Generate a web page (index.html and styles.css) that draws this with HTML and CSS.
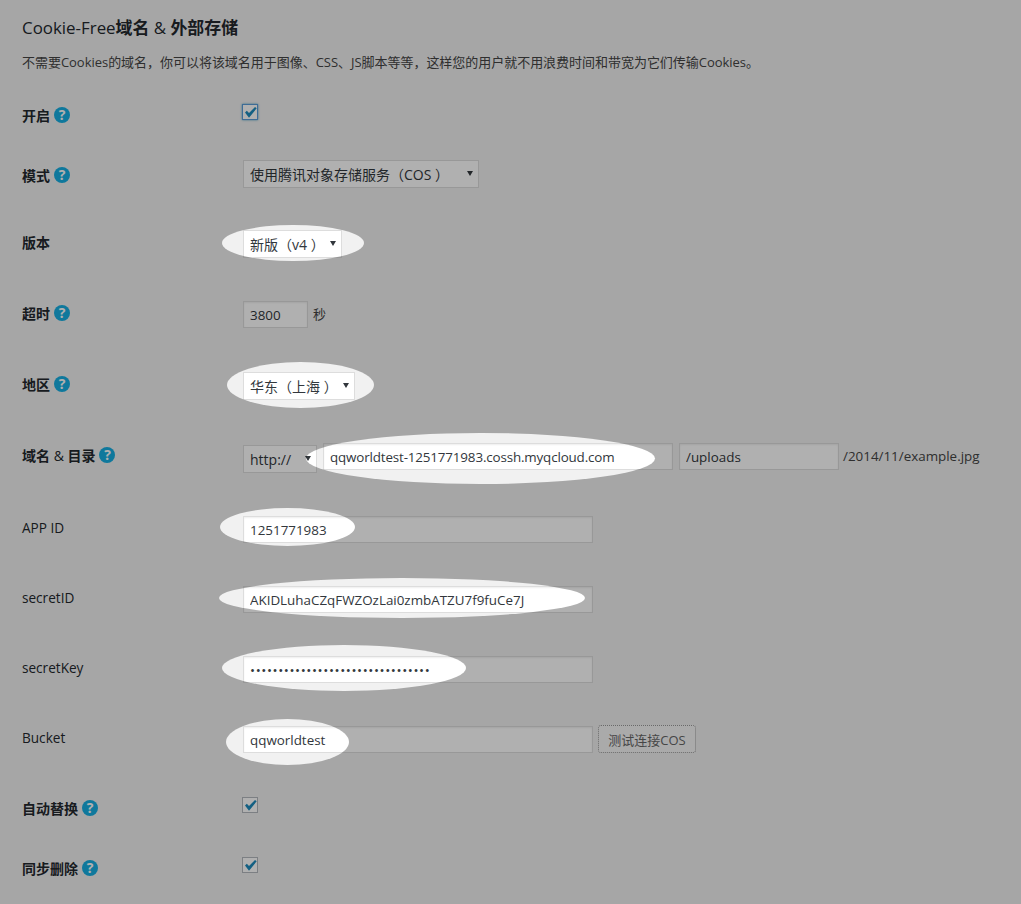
FILE: index.html
```html
<!DOCTYPE html>
<html lang="zh-CN">
<head>
<meta charset="utf-8">
<title>Cookie-Free域名 &amp; 外部存储</title>
<link rel="stylesheet" href="styles.css">
</head>
<body>
<main class="page">
  <h2 class="title"><span class="latin">Cookie-Free</span>域名 <span class="latin">&amp;</span> 外部存储</h2>
  <p class="desc">不需要Cookies的域名，你可以将该域名用于图像、CSS、JS脚本等等，这样您的用户就不用浪费时间和带宽为它们传输Cookies。</p>
  <form class="form">
    <div class="label label-up"><span>开启</span><span class="help">?</span></div>
    <div class="field"><label class="check"><input type="checkbox" class="box box-focus" checked><svg class="tick" viewBox="0 0 16 16"><path d="M3 8.5L4.8 6.8l2.2 2.3L13 3l1.7 1.3L7 13.7z"/></svg></label></div>

    <div class="label label-down"><span>模式</span><span class="help">?</span></div>
    <div class="field"><span class="select select-mode"><select><option>使用腾讯对象存储服务（COS ）</option></select></span></div>

    <div class="label"><span>版本</span></div>
    <div class="field"><span class="select select-ver"><select><option>新版（v4 ）</option></select></span></div>

    <div class="label"><span>超时</span><span class="help">?</span></div>
    <div class="field"><input class="text text-short" value="3800"><span class="unit">秒</span></div>

    <div class="label"><span>地区</span><span class="help">?</span></div>
    <div class="field"><span class="select select-region"><select><option>华东（上海 ）</option></select></span></div>

    <div class="label"><span>域名 <span class="latin">&amp;</span> 目录</span><span class="help">?</span></div>
    <div class="field"><span class="select select-proto"><select><option>http://</option></select></span><input class="text text-wide text-domain" value="qqworldtest-1251771983.cossh.myqcloud.com"><input class="text text-dir" value="/uploads"><span class="suffix">/2014/11/example.jpg</span></div>

    <div class="label label-plain"><span>APP ID</span></div>
    <div class="field"><input class="text text-wide" value="1251771983"></div>

    <div class="label label-plain"><span>secretID</span></div>
    <div class="field"><input class="text text-wide" value="AKIDLuhaCZqFWZOzLai0zmbATZU7f9fuCe7J"></div>

    <div class="label label-plain"><span>secretKey</span></div>
    <div class="field"><input class="text text-wide text-secret" type="password" value="abcdefghijklmnopqrstuvwxyz012345"></div>

    <div class="label label-plain"><span>Bucket</span></div>
    <div class="field"><input class="text text-wide" value="qqworldtest"><button type="button" class="button">测试连接COS</button></div>

    <div class="label label-up"><span>自动替换</span><span class="help">?</span></div>
    <div class="field"><label class="check"><input type="checkbox" class="box" checked><svg class="tick" viewBox="0 0 16 16"><path d="M3 8.5L4.8 6.8l2.2 2.3L13 3l1.7 1.3L7 13.7z"/></svg></label></div>

    <div class="label label-up"><span>同步删除</span><span class="help">?</span></div>
    <div class="field"><label class="check"><input type="checkbox" class="box" checked><svg class="tick" viewBox="0 0 16 16"><path d="M3 8.5L4.8 6.8l2.2 2.3L13 3l1.7 1.3L7 13.7z"/></svg></label></div>
  </form>
</main>
<svg class="dim" viewBox="0 0 1021 904" aria-hidden="true">
  <mask id="holes">
    <rect width="1021" height="904" fill="#fff"/>
    <ellipse cx="293" cy="243" rx="71" ry="18"/>
    <ellipse cx="300.5" cy="385" rx="73.5" ry="23"/>
    <ellipse cx="480.5" cy="458.5" rx="174.5" ry="25.5"/>
    <ellipse cx="287.5" cy="527" rx="67.5" ry="19"/>
    <ellipse cx="402" cy="598" rx="183" ry="20"/>
    <ellipse cx="344" cy="668" rx="122" ry="23"/>
    <ellipse cx="287.5" cy="742" rx="61.5" ry="23"/>
  </mask>
  <rect class="dim-fill" width="1021" height="904" mask="url(#holes)"/>
</svg>
</body>
</html>
```
FILE: styles.css
```css
* { box-sizing: border-box; }
html, body { margin: 0; height: 904px; overflow: hidden; }
body {
  position: relative;
  background: #f1f1f1;
  color: #444;
  font-family: "Open Sans", "Noto Sans CJK SC", sans-serif;
  font-size: 14px;
}
.page { padding: 16px 0 0 22px; }
.title {
  margin: 0;
  font-size: 16.9px;
  line-height: 24px;
  font-weight: 700;
  color: #23282d;
}
.latin { font-weight: 400; }
.desc {
  margin: 12px 0 32px;
  font-size: 13px;
  line-height: 20px;
  letter-spacing: -.03px;
  color: #444;
}
.form {
  display: grid;
  grid-template-columns: 221px 1fr;
  grid-template-rows: 56px 70px 71px 71px 71px 73px 70px 70px 70px 71px 60px 47px;
}
.label {
  display: flex;
  align-items: center;
  gap: 4px;
  height: 24px;
  font-weight: 700;
  color: #23282d;
}
.label-up { margin-top: -1px; }
.label-down { margin-top: 3px; }
.label-plain { margin-top: -1px; font-weight: 400; font-size: 13.6px; }
.help {
  width: 16px;
  height: 16px;
  border-radius: 50%;
  background: #17afe2;
  color: #fff;
  font-size: 14px;
  line-height: 16px;
  font-weight: 700;
  text-align: center;
}
.field { display: flex; align-items: flex-start; }
.check { position: relative; display: block; width: 16px; height: 16px; margin-left: -1px; }
.box {
  appearance: none;
  display: block;
  width: 16px;
  height: 16px;
  margin: 0;
  background: #fff;
  border: 1px solid #b4b9be;
}
.box-focus { border-color: #5b9dd9; box-shadow: 0 0 2px rgba(30, 140, 190, .8); }
.tick { position: absolute; left: 0; top: 0; width: 16px; height: 16px; fill: #1e8cbe; }
.select { position: relative; display: block; height: 28px; }
.select select {
  appearance: none;
  display: block;
  width: 100%;
  height: 100%;
  padding: 0 18px 0 6px;
  border: 1px solid #ddd;
  border-radius: 0;
  background: #fff;
  color: #32373c;
  font: inherit;
}
.select::after {
  content: "";
  position: absolute;
  right: 6px;
  top: 11px;
  border-style: solid;
  border-width: 5px 3.5px 0;
  border-color: #32373c transparent transparent;
}
.select-mode { width: 236px; }
.select-ver { width: 99px; }
.select-region { width: 112px; }
.select-proto { width: 74px; margin-top: 2px; margin-right: 6px; }
.text {
  display: block;
  height: 27px;
  margin: 0;
  padding: 0 6px;
  border: 1px solid #ddd;
  border-radius: 0;
  background: #fff;
  color: #32373c;
  font: inherit;
  font-size: 13.4px;
  box-shadow: inset 0 1px 2px rgba(0, 0, 0, .07);
}
.text-short { width: 65px; }
.text-wide { width: 350px; }
.text-domain { letter-spacing: -.15px; }
.text-secret { letter-spacing: .6px; }
.text-dir { width: 160px; margin-left: 6px; }
.unit { margin-left: 5px; line-height: 27px; font-size: 13px; }
.suffix { margin-left: 4px; line-height: 27px; font-size: 13.4px; }
.button {
  height: 28px;
  width: 98px;
  margin: -1px 0 0 5px;
  padding: 0;
  border: 1px dotted #999;
  border-radius: 3px;
  background: #f7f7f7;
  color: #666;
  font: inherit;
  font-size: 13px;
}
.dim {
  position: absolute;
  left: 0;
  top: 0;
  width: 1021px;
  height: 904px;
  pointer-events: none;
}
.dim-fill { fill: rgba(0, 0, 0, .31); }
```
